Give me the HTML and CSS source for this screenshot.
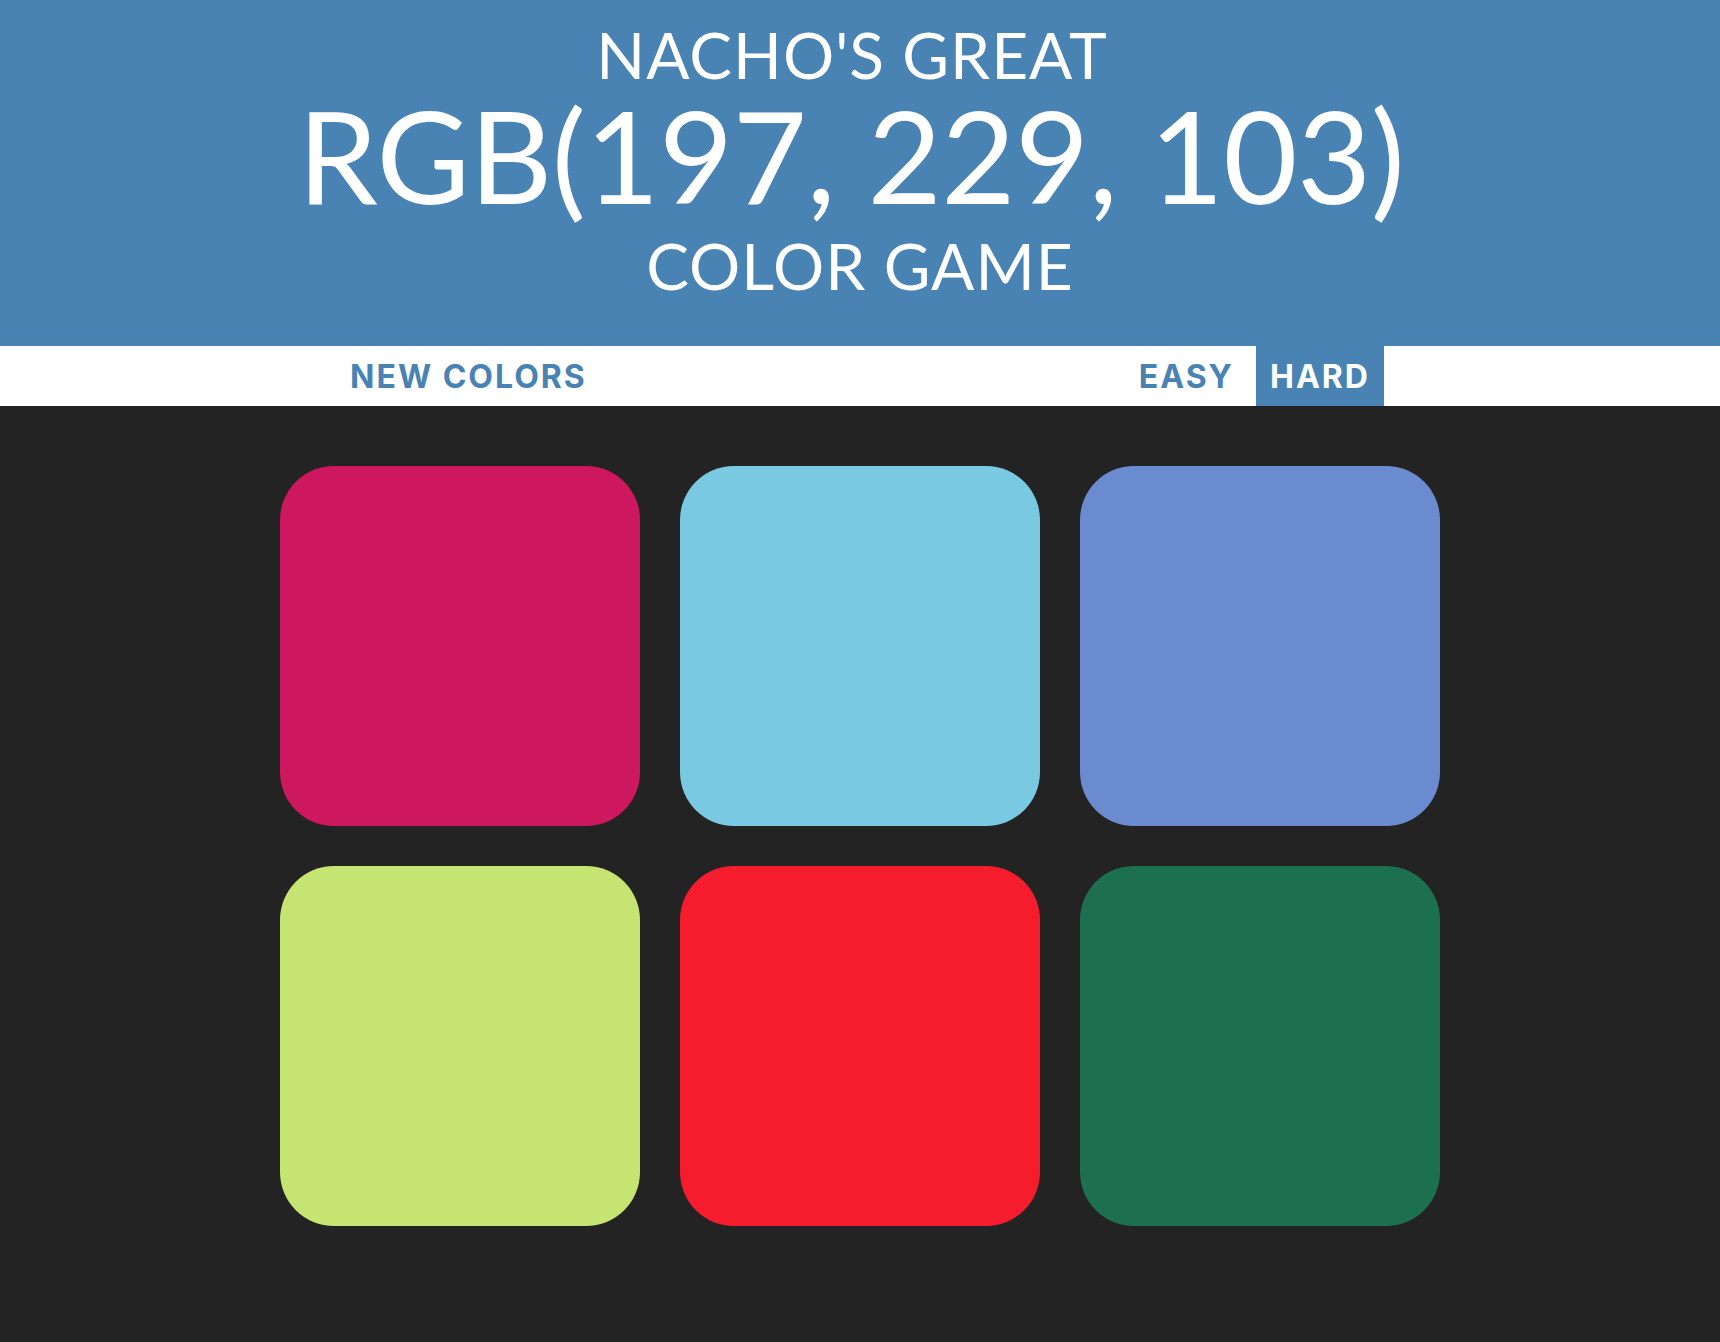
FILE: index.html
```html
<!DOCTYPE html>
<html lang="en">
<head>
<meta charset="utf-8">
<title>Color Game</title>
<link rel="stylesheet" href="styles.css">
</head>
<body>
  <h1 class="title">
    <span class="title-line title-first">NACHO'S GREAT</span>
    <span class="title-rgb">RGB(197, 229, 103)</span>
    <span class="title-line title-last">COLOR GAME</span>
  </h1>
  <div class="stripe">
    <button class="btn">NEW COLORS</button>
    <span class="message"></span>
    <button class="btn mode">EASY</button>
    <button class="btn mode selected">HARD</button>
  </div>
  <div class="board">
    <div class="square sq-1"></div>
    <div class="square sq-2"></div>
    <div class="square sq-3"></div>
    <div class="square sq-4"></div>
    <div class="square sq-5"></div>
    <div class="square sq-6"></div>
  </div>
</body>
</html>
```

FILE: styles.css
```css
html, body {
  margin: 0;
  padding: 0;
}
body {
  background: #232323;
  font-family: Lato, "Open Sans", sans-serif;
  min-height: 1342px;
}
.title {
  margin: 0;
  padding: 20px 0 0;
  height: 346px;
  box-sizing: border-box;
  background: #4883b3;
  color: #fff;
  text-align: center;
  font-weight: 400;
  display: flex;
  flex-direction: column;
  align-items: center;
}
.title-line {
  font-size: 64px;
  line-height: 70px;
  letter-spacing: 1px;
}
.title-first {
  padding-right: 16px;
}
.title-rgb {
  font-size: 128px;
  line-height: 130px;
  letter-spacing: -0.5px;
  padding-right: 18px;
}
.title-last {
  margin-top: 11px;
}
.stripe {
  background: #fff;
  height: 60px;
  display: flex;
  justify-content: center;
  align-items: stretch;
  gap: 8px;
}
.btn {
  border: none;
  background: none;
  margin: 0;
  padding: 0 14px;
  font-family: Inter, Roboto, sans-serif;
  font-weight: 700;
  font-size: 32px;
  letter-spacing: 2px;
  color: #4883b3;
}
.btn.selected {
  background: #4883b3;
  color: #fff;
}
.message {
  width: 508px;
}
.board {
  width: 1160px;
  margin: 60px auto 0;
  display: grid;
  grid-template-columns: repeat(3, 360px);
  gap: 40px;
}
.square {
  height: 360px;
  border-radius: 15%;
}
.sq-1 { background: #cd175e; }
.sq-2 { background: #79c9e3; }
.sq-3 { background: #6b8bd0; }
.sq-4 { background: #c6e472; }
.sq-5 { background: #f51c2e; }
.sq-6 { background: #1c7050; }
```
